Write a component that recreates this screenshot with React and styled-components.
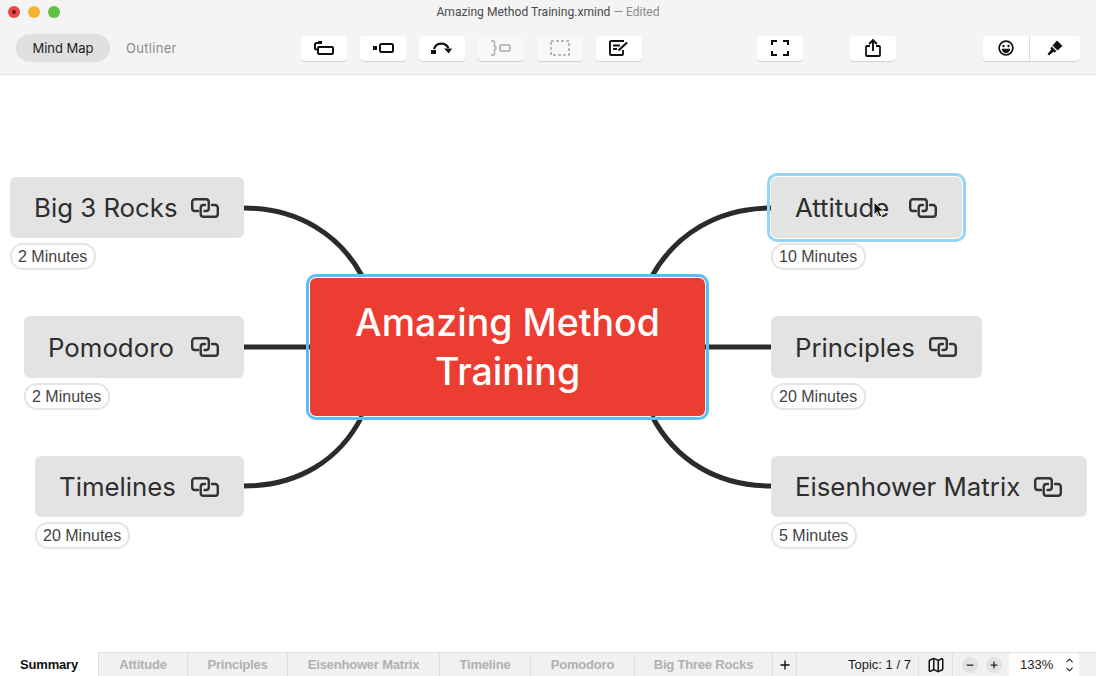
import styled, { createGlobalStyle } from "styled-components";
import { Map as MapIcon, Minus, Plus, ChevronUp, ChevronDown } from "lucide-react";

const GlobalStyle = createGlobalStyle`
  html, body {
    margin: 0;
    padding: 0;
    background: #fff;
  }
  * {
    box-sizing: border-box;
  }
`;

const Window = styled.div`
  width: 1096px;
  height: 676px;
  display: flex;
  flex-direction: column;
  overflow: hidden;
  font-family: "Inter", "Liberation Sans", sans-serif;
  background: #fff;
`;

const Header = styled.header`
  height: 75px;
  flex: none;
  background: #f4f4f4;
  border-bottom: 1px solid #e2e2e2;
  display: flex;
  flex-direction: column;
`;

const TitleBar = styled.div`
  height: 24px;
  flex: none;
  display: grid;
  grid-template-columns: 1fr auto 1fr;
  align-items: center;
  padding: 0 8px;
`;

const Lights = styled.div`
  display: flex;
  gap: 8px;
`;

const Light = styled.span`
  width: 12px;
  height: 12px;
  border-radius: 50%;
  background: ${(p) => p.$color};
  display: flex;
  align-items: center;
  justify-content: center;
  &::after {
    content: "";
    width: 4px;
    height: 4px;
    border-radius: 50%;
    background: ${(p) => (p.$dot ? "#7c1414" : "transparent")};
  }
`;

const Title = styled.div`
  font-family: "Roboto", "Liberation Sans", sans-serif;
  font-size: 12.1px;
  color: #4a4a4a;
  white-space: nowrap;
  span {
    color: #8d8d8d;
  }
`;

const Toolbar = styled.div`
  flex: 1;
  display: grid;
  grid-template-columns: 285px 456px 93px 133px 97px;
  padding-left: 16px;
  padding-bottom: 2px;
  align-items: center;
`;

const Group = styled.div`
  display: flex;
  align-items: center;
  gap: 13px;
`;

const ModeGroup = styled(Group)`
  gap: 16px;
`;

const ModePill = styled.div`
  height: 28px;
  width: ${(p) => (p.$active ? "94px" : "auto")};
  border-radius: 14px;
  background: ${(p) => (p.$active ? "#e0e0e0" : "transparent")};
  color: ${(p) => (p.$active ? "#222" : "#8a8a8a")};
  font-size: 13px;
  letter-spacing: ${(p) => (p.$active ? "0" : "0.3px")};
  display: flex;
  align-items: center;
  justify-content: center;
`;

const ToolButton = styled.button`
  width: 46px;
  height: 25px;
  padding: 0;
  border: none;
  border-radius: 4px;
  background: ${(p) => (p.$disabled ? "#f8f8f8" : "#fff")};
  box-shadow: 0 1px 1px rgba(0, 0, 0, 0.14);
  color: ${(p) => (p.$disabled ? "#a8a8a8" : "#111")};
  display: flex;
  align-items: center;
  justify-content: center;
`;

const SplitButton = styled.div`
  width: 97px;
  height: 25px;
  border-radius: 4px;
  background: #fff;
  box-shadow: 0 1px 1px rgba(0, 0, 0, 0.14);
  color: #111;
  display: grid;
  grid-template-columns: 47px 50px;
  & > div {
    display: flex;
    align-items: center;
    justify-content: center;
  }
  & > div:first-child {
    border-right: 1px solid #dcdcdc;
  }
`;

const Canvas = styled.main`
  flex: 1;
  position: relative;
  background: #fff;
`;

const Lines = styled.svg`
  position: absolute;
  inset: 0;
`;

const TopicWrap = styled.div`
  position: absolute;
  left: ${(p) => p.$x}px;
  top: ${(p) => p.$y}px;
  display: flex;
  flex-direction: column;
  align-items: flex-start;
  gap: 5px;
`;

const Topic = styled.div`
  width: ${(p) => p.$w}px;
  height: ${(p) => p.$h || 61}px;
  padding: 0 25px 0 24px;
  border-radius: 6px;
  background: #e3e3e3;
  color: #2e2e2e;
  font-family: "Inter", "Liberation Sans", sans-serif;
  font-size: 25.8px;
  display: flex;
  align-items: center;
  justify-content: space-between;
  white-space: nowrap;
  ${(p) =>
    p.$selected &&
    `
    outline: 3px solid #94d4f6;
    outline-offset: 1px;
  `}
`;

const Duration = styled.div`
  height: 27px;
  padding: 0 7px 0 6px;
  border: 2px solid #e5e5e5;
  border-radius: 13px;
  background: #fff;
  color: #444;
  font-family: "Liberation Sans", sans-serif;
  font-size: 16px;
  display: flex;
  align-items: center;
`;

const Central = styled.div`
  position: absolute;
  left: 310px;
  top: 203px;
  width: 395px;
  height: 138px;
  border-radius: 6px;
  background: #ec3d32;
  outline: 3px solid #5cbdf5;
  outline-offset: 1px;
  color: #fff;
  font-family: "Inter", "Liberation Sans", sans-serif;
  font-weight: 500;
  font-size: 37.5px;
  line-height: 49px;
  text-align: center;
  display: flex;
  align-items: center;
  justify-content: center;
`;

const Cursor = styled.svg`
  position: absolute;
  left: 873px;
  top: 126px;
`;

const TabBar = styled.footer`
  height: 24px;
  flex: none;
  background: #f1f1f1;
  border-top: 1px solid #e2e2e2;
  display: flex;
  align-items: stretch;
  font-size: 13px;
`;

const Tab = styled.div`
  width: ${(p) => p.$w}px;
  flex: none;
  border-right: 1px solid #dedede;
  background: ${(p) => (p.$active ? "#fff" : "transparent")};
  color: ${(p) => (p.$active ? "#111" : "#b0b0b0")};
  font-family: "Liberation Sans", sans-serif;
  font-weight: 700;
  letter-spacing: -0.2px;
  display: flex;
  align-items: center;
  justify-content: center;
  white-space: nowrap;
  margin-top: ${(p) => (p.$active ? "-1px" : "0")};
`;

const AddTab = styled(Tab)`
  color: #111;
`;

const Status = styled.div`
  margin-left: 51px;
  width: 71px;
  flex: none;
  color: #1a1a1a;
  border-right: 1px solid #e2e2e2;
  display: flex;
  align-items: center;
  font-family: "Liberation Sans", sans-serif;
  white-space: nowrap;
`;

const MapSlot = styled.div`
  width: 34px;
  flex: none;
  border-right: 1px solid #e2e2e2;
  display: flex;
  align-items: center;
  justify-content: center;
  color: #111;
`;

const ZoomGroup = styled.div`
  margin-left: 9px;
  display: flex;
  align-items: center;
  gap: 8px;
`;

const ZoomButton = styled.div`
  width: 16px;
  height: 16px;
  border-radius: 50%;
  background: #e2e2e2;
  color: #222;
  display: flex;
  align-items: center;
  justify-content: center;
`;

const ZoomSelect = styled.div`
  margin-left: 7px;
  width: 70px;
  background: #fff;
  border-radius: 4px 4px 0 0;
  padding: 0 4px 0 11px;
  color: #222;
  font-family: "Liberation Sans", sans-serif;
  display: flex;
  align-items: center;
  justify-content: space-between;
`;

const Stepper = styled.div`
  display: flex;
  flex-direction: column;
  color: #222;
  svg {
    display: block;
    margin: -1px 0;
  }
`;

const LinkSvg = styled.svg`
  flex: none;
`;

const LinkIcon = () => (
  <LinkSvg width="28" height="20" viewBox="0 0 28 20" fill="none" stroke="#333" strokeWidth="2.4" strokeLinecap="round" strokeLinejoin="round">
    <path d="M7 13H4a2.8 2.8 0 0 1-2.8-2.8V4A2.8 2.8 0 0 1 4 1.2h11A2.8 2.8 0 0 1 17.8 4v6.2A2.8 2.8 0 0 1 15 13h-1.5" />
    <path d="M21 7h3a2.8 2.8 0 0 1 2.8 2.8V16a2.8 2.8 0 0 1-2.8 2.8H12.5A2.8 2.8 0 0 1 9.7 16V9.8A2.8 2.8 0 0 1 12.5 7H14" />
  </LinkSvg>
);

const Glyph = ({ w = 22, h = 16, children }) => (
  <svg width={w} height={h} viewBox={`0 0 ${w} ${h}`} fill="none" stroke="currentColor" strokeWidth="2">
    {children}
  </svg>
);

const SubtopicIcon = () => (
  <Glyph>
    <rect x="5" y="1" width="4" height="3" fill="currentColor" stroke="none" />
    <path d="M5 3H3.5A1.5 1.5 0 0 0 2 4.5V8a1.5 1.5 0 0 0 1.5 1.5H5" />
    <rect x="5" y="7" width="15" height="7" rx="1" />
  </Glyph>
);

const SiblingIcon = () => (
  <Glyph>
    <rect x="1" y="6" width="4" height="4" fill="currentColor" stroke="none" />
    <rect x="8" y="4" width="13" height="8" rx="1.5" />
  </Glyph>
);

const RelationIcon = () => (
  <Glyph>
    <rect x="0" y="10" width="5" height="4" fill="currentColor" stroke="none" />
    <path d="M3 9C5 2.5 14 1.5 17.5 8" strokeWidth="2.2" />
    <path d="M13 8.5h8l-3.2 5z" fill="currentColor" stroke="none" />
  </Glyph>
);

const BoundaryIcon = () => (
  <Glyph>
    <path d="M1 1h2.5a1 1 0 0 1 1 1v4.5L6.5 8l-2 1.5V14a1 1 0 0 1-1 1H1" strokeWidth="1.4" />
    <rect x="10" y="5" width="10" height="6" rx="1" strokeWidth="1.6" />
  </Glyph>
);

const DashedIcon = () => (
  <Glyph w={20} h={16}>
    <rect x="1" y="1" width="18" height="14" strokeWidth="1.6" strokeDasharray="3 2" />
  </Glyph>
);

const NoteIcon = () => (
  <Glyph w={20} h={16}>
    <path d="M15 1H2a1 1 0 0 0-1 1v12a1 1 0 0 0 1 1h11a1 1 0 0 0 1-1v-4" strokeWidth="1.9" />
    <path d="M4 5.5h7M4 9h4" strokeWidth="1.8" />
    <path d="M9.5 10.5 18 2.5" strokeWidth="2.2" />
  </Glyph>
);

const FullscreenIcon = () => (
  <Glyph w={18} h={16}>
    <path d="M6 1H1v4M12 1h5v4M1 11v4h5M17 11v4h-5" strokeWidth="2" />
  </Glyph>
);

const ShareIcon = () => (
  <Glyph w={16} h={18}>
    <path d="M5 7H2a1 1 0 0 0-1 1v8a1 1 0 0 0 1 1h12a1 1 0 0 0 1-1V8a1 1 0 0 0-1-1h-3" strokeWidth="1.8" />
    <path d="M8 12V2" strokeWidth="1.9" />
    <path d="M4.2 5 8 1l3.8 4" strokeWidth="1.9" />
  </Glyph>
);

const SmileIcon = () => (
  <Glyph w={16} h={16}>
    <circle cx="8" cy="8" r="6.9" strokeWidth="1.7" />
    <circle cx="5.5" cy="6" r="1.2" fill="currentColor" stroke="none" />
    <circle cx="10.5" cy="6" r="1.2" fill="currentColor" stroke="none" />
    <path d="M3.8 8.8h8.4a4.2 4.2 0 0 1-8.4 0z" fill="currentColor" stroke="none" />
  </Glyph>
);

const BrushIcon = () => (
  <svg width="16" height="16" viewBox="0 0 16 16" fill="currentColor">
    <path d="M10 .5 15.5 6 10.5 10.5 5.5 5.5z" />
    <path d="M4.8 6.6 9.4 11.2 7.6 12.6 6.6 11.8 2 15.5.5 14 4.2 9.4 3.4 8.4z" />
  </svg>
);

const branches = [
  { name: "Big 3 Rocks", time: "2 Minutes", x: 10, y: 102, w: 234 },
  { name: "Pomodoro", time: "2 Minutes", x: 24, y: 241, w: 220, h: 62 },
  { name: "Timelines", time: "20 Minutes", x: 35, y: 381, w: 209 },
  { name: "Attitude", time: "10 Minutes", x: 771, y: 102, w: 191, selected: true },
  { name: "Principles", time: "20 Minutes", x: 771, y: 241, w: 211, h: 62 },
  { name: "Eisenhower Matrix", time: "5 Minutes", x: 771, y: 381, w: 316 },
];

const connectors = [
  "M244 133C298 133 340 160 362 201",
  "M244 272H310",
  "M244 411C298 411 340 385 362 341",
  "M771 133C717 133 675 160 652 201",
  "M705 272H771",
  "M771 411C717 411 675 385 652 341",
];

const tabs = [
  { label: "Summary", w: 99, active: true },
  { label: "Attitude", w: 89 },
  { label: "Principles", w: 100 },
  { label: "Eisenhower Matrix", w: 152 },
  { label: "Timeline", w: 91 },
  { label: "Pomodoro", w: 104 },
  { label: "Big Three Rocks", w: 138 },
];

export default function App() {
  return (
    <Window>
      <GlobalStyle />
      <Header>
        <TitleBar>
          <Lights>
            <Light $color="#e8484a" $dot />
            <Light $color="#f6b432" />
            <Light $color="#5dc146" />
          </Lights>
          <Title>
            Amazing Method Training.xmind <span>— Edited</span>
          </Title>
        </TitleBar>
        <Toolbar>
          <ModeGroup>
            <ModePill $active>Mind Map</ModePill>
            <ModePill>Outliner</ModePill>
          </ModeGroup>
          <Group>
            <ToolButton><SubtopicIcon /></ToolButton>
            <ToolButton><SiblingIcon /></ToolButton>
            <ToolButton><RelationIcon /></ToolButton>
            <ToolButton $disabled><BoundaryIcon /></ToolButton>
            <ToolButton $disabled><DashedIcon /></ToolButton>
            <ToolButton><NoteIcon /></ToolButton>
          </Group>
          <Group>
            <ToolButton><FullscreenIcon /></ToolButton>
          </Group>
          <Group>
            <ToolButton><ShareIcon /></ToolButton>
          </Group>
          <SplitButton>
            <div><SmileIcon /></div>
            <div><BrushIcon /></div>
          </SplitButton>
        </Toolbar>
      </Header>

      <Canvas>
        <Lines width="1096" height="577" fill="none" stroke="#2b2b2b" strokeWidth="5">
          {connectors.map((d) => (
            <path key={d} d={d} />
          ))}
        </Lines>
        <Central>
          Amazing Method
          <br />
          Training
        </Central>
        {branches.map((b) => (
          <TopicWrap key={b.name} $x={b.x} $y={b.y}>
            <Topic $w={b.w} $h={b.h} $selected={b.selected}>
              {b.name}
              <LinkIcon />
            </Topic>
            <Duration>{b.time}</Duration>
          </TopicWrap>
        ))}
        <Cursor width="12" height="17" viewBox="0 0 12 17">
          <path d="M1 1v13l3.2-3 2.2 5 2.4-1-2.2-4.8H11z" fill="#111" stroke="#fff" strokeWidth="1" />
        </Cursor>
      </Canvas>

      <TabBar>
        {tabs.map((t) => (
          <Tab key={t.label} $w={t.w} $active={t.active}>
            {t.label}
          </Tab>
        ))}
        <AddTab $w={24}>
          <Plus size={14} strokeWidth={2.4} />
        </AddTab>
        <Status>Topic: 1 / 7</Status>
        <MapSlot>
          <MapIcon size={18} strokeWidth={2} />
        </MapSlot>
        <ZoomGroup>
          <ZoomButton><Minus size={10} strokeWidth={3} /></ZoomButton>
          <ZoomButton><Plus size={10} strokeWidth={3} /></ZoomButton>
        </ZoomGroup>
        <ZoomSelect>
          133%
          <Stepper>
            <ChevronUp size={11} strokeWidth={2.4} />
            <ChevronDown size={11} strokeWidth={2.4} />
          </Stepper>
        </ZoomSelect>
      </TabBar>
    </Window>
  );
}
